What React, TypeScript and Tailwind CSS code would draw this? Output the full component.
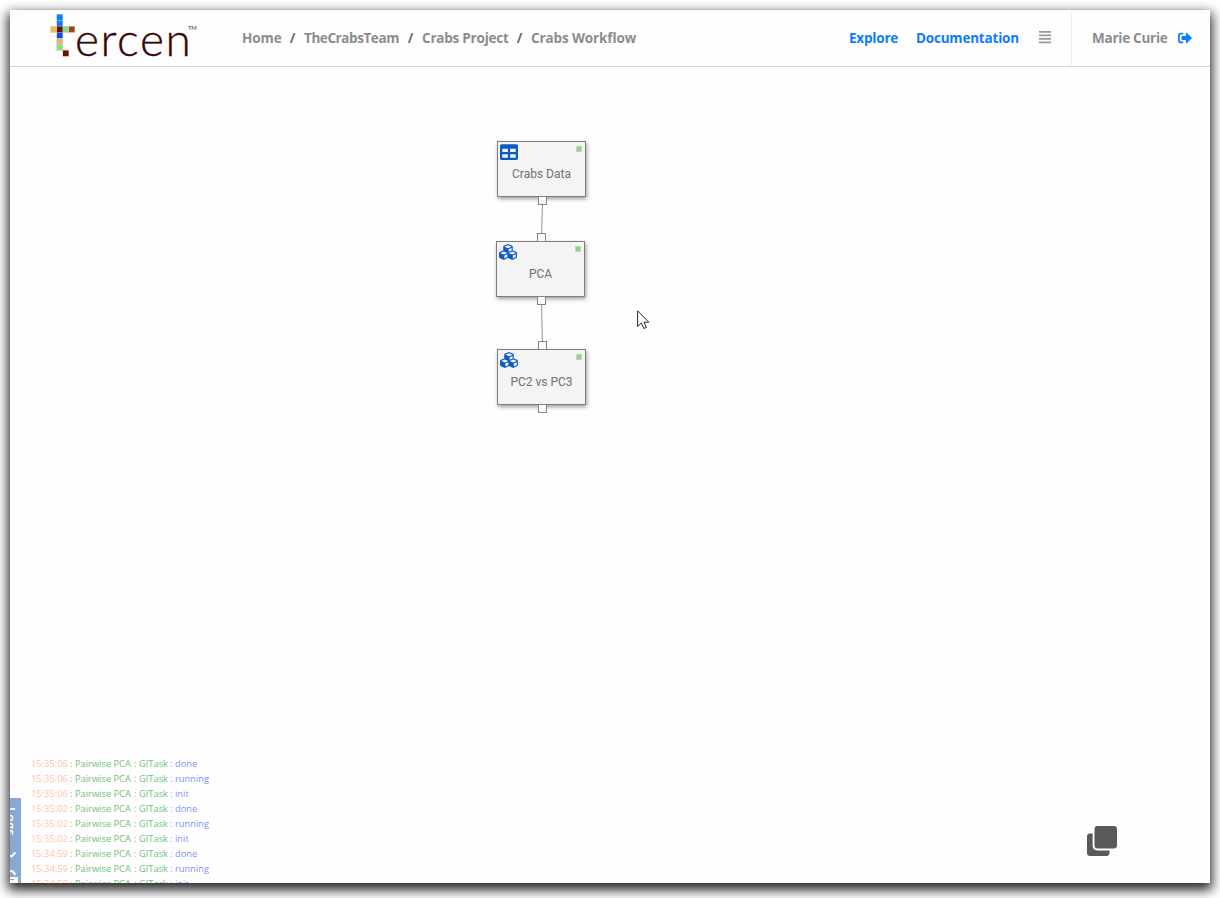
import React from "react";
import { FaAlignJustify, FaClone, FaCubes, FaSignOutAlt, FaTable } from "react-icons/fa";

const squares = [
  { x: 7, y: 0, c: "#0a80ff" },
  { x: 7, y: 6, c: "#0a80ff" },
  { x: 1, y: 12, c: "#f0b46c" },
  { x: 7, y: 12, c: "#5a1509" },
  { x: 13, y: 12, c: "#8fd694" },
  { x: 19, y: 12, c: "#984726" },
  { x: 7, y: 18, c: "#0b4fd8" },
  { x: 7, y: 24, c: "#f0b46c" },
  { x: 7, y: 30, c: "#98dc6c" },
  { x: 13, y: 36, c: "#641508" },
];

function Logo() {
  return (
    <svg className="ml-[40px] mt-[4px] shrink-0" width="150" height="50" viewBox="0 0 150 50">
      <rect x="6" y="0" width="7" height="37" fill="#9fcdf7" opacity=".6" />
      <rect x="0" y="12" width="25" height="7" fill="#f5c9a4" opacity=".8" />
      <rect x="12" y="35.5" width="7" height="7" fill="#f5b9a4" opacity=".7" />
      {squares.map((s) => (
        <rect key={`${s.x}-${s.y}`} x={s.x} y={s.y + 0.5} width={s.x === 1 ? 6 : 5.6} height="5.7" fill={s.c} />
      ))}
      <text x="25 50.5 67 90 115.5" y="41.8" fontFamily="Lato, sans-serif" fontWeight="300" fontSize="46" fill="#350807" stroke="#350807" strokeWidth=".35">
        ercen
      </text>
      <text x="138" y="15.5" textLength="8.5" lengthAdjust="spacingAndGlyphs" fontFamily="Lato, sans-serif" fontWeight="400" fontSize="6" fill="#4a3038">
        TM
      </text>
    </svg>
  );
}

const crumbs = [
  { name: "Home", w: "w-[39px] tracking-[-0.1px]" },
  { name: "TheCrabsTeam", w: "w-[95px] tracking-[-0.42px]" },
  { name: "Crabs Project", w: "w-[86px] tracking-[-0.22px]" },
  { name: "Crabs Workflow", w: "w-[106px] tracking-[-0.12px]" },
];

function Header() {
  return (
    <header className="flex h-[57px] shrink-0 border-b border-[#d6d6d6] font-['Open_Sans',sans-serif] text-[13.5px] font-bold tracking-[-0.25px] text-[#8c8c8c]">
      <Logo />
      <nav className="ml-[42px] flex items-center whitespace-nowrap">
        {crumbs.map((c, i) => (
          <React.Fragment key={c.name}>
            {i > 0 && <span className="w-[23px] text-center text-[#6c6c6c]">/</span>}
            <span className={c.w}>{c.name}</span>
          </React.Fragment>
        ))}
      </nav>
      <div className="ml-auto flex whitespace-nowrap">
        <div className="flex w-[222px] items-center tracking-[-0.2px] text-[#0d7bff]">
          <span className="w-[67px]">Explore</span>
          <span className="w-[122px]">Documentation</span>
          <FaAlignJustify className="-mt-[3px] text-[#999]" size={14} />
        </div>
        <div className="flex w-[139px] items-center border-l border-[#eee] pl-[20px]">
          <span className="w-[86px]">Marie Curie</span>
          <FaSignOutAlt className="text-[#0d7bff]" size={14} />
        </div>
      </div>
    </header>
  );
}

function Node({ label, place, table }: { label: string; place: string; table?: boolean }) {
  return (
    <div className={`absolute h-[56px] w-[89px] border border-[#7e7e7e] bg-[#f4f4f4] shadow-[1px_2px_4px_rgba(0,0,0,0.38)] ${place}`}>
      <div className="flex h-[20px] items-start justify-between pl-[2px] pr-[3px] pt-px text-[#0b5bc7]">
        {table ? <FaTable size={18} /> : <FaCubes size={18} />}
        <span className="mt-[3px] size-[6px] border border-[#b4dfb4] bg-[#8dd48f]" />
      </div>
      <div className="pt-[4px] text-center font-['Roboto',sans-serif] text-[12px] leading-[16px] text-[#707070]">{label}</div>
    </div>
  );
}

function Port({ place }: { place: string }) {
  return <div className={`absolute size-[9px] border border-[#858585] bg-[#fafafa] ${place}`} />;
}

function Canvas() {
  return (
    <>
      <svg className="absolute left-[480px] top-[180px]" width="80" height="180" fill="none" stroke="#969696">
        <path d="M52.5 14L51.5 48M51.5 114L52.5 156" />
      </svg>
      <Node label="Crabs Data" place="left-[487px] top-[131px]" table />
      <Node label="PCA" place="left-[486px] top-[231px]" />
      <Node label="PC2 vs PC3" place="left-[487px] top-[339px]" />
      <Port place="left-[528px] top-[186px]" />
      <Port place="left-[527px] top-[223px]" />
      <Port place="left-[527px] top-[286px]" />
      <Port place="left-[528px] top-[331px]" />
      <Port place="left-[528px] top-[394px]" />
      <svg className="absolute left-[627px] top-[300px]" width="13" height="20" viewBox="0 0 13 20">
        <path d="M.6 .8V16.5L4.3 13L6.8 18.5L9.3 17.4L7 12.2H11.8Z" fill="white" stroke="#252530" strokeWidth="1" />
      </svg>
    </>
  );
}

const log = [
  ["15:35:06", "done"],
  ["15:35:06", "running"],
  ["15:35:06", "init"],
  ["15:35:02", "done"],
  ["15:35:02", "running"],
  ["15:35:02", "init"],
  ["15:34:59", "done"],
  ["15:34:59", "running"],
  ["15:34:58", "init"],
];

export default function App() {
  return (
    <div className="h-[898px] w-[1220px] overflow-hidden bg-white p-[10px]">
      <div className="relative flex h-[873px] w-[1200px] flex-col bg-[#fefefe] shadow-[0_5px_11px_2px_rgba(0,0,0,0.85)]">
        <Header />
        <div className="flex min-h-0 flex-1 items-end overflow-hidden">
          <div className="relative h-[85px] w-[11px] shrink-0 overflow-hidden bg-[#86a9d3]">
            <span className="absolute -left-[7px] top-[9px] font-['Open_Sans',sans-serif] text-[13px] font-semibold leading-[16px] text-white [writing-mode:vertical-rl]">
              Logs
            </span>
            <svg className="absolute left-0 top-[50px]" width="11" height="35" fill="none" stroke="white" strokeWidth="2">
              <path d="M0 7.5L1.5 8.5L5.5 4.5M0 23Q4 22.5 5 27" />
              <path d="M0 29H8V35H0Z" fill="white" stroke="none" />
              <path d="M0 31.5H4" stroke="#86a9d3" strokeWidth="1" />
            </svg>
          </div>
          <div className="ml-[10px] h-[127px] overflow-hidden font-['Open_Sans',sans-serif] text-[9.3px] leading-[15px] text-[#a3a9a3]">
            {log.map(([time, state], i) => (
              <div key={i} className="flex whitespace-nowrap">
                <span className="w-[39px] text-[#ffc6a8]">{time}</span>
                <span className="w-[5px]">:</span>
                <span className="w-[59px] text-[#74bf78]">Pairwise PCA</span>
                <span className="w-[5px]">:</span>
                <span className="w-[31px] text-[#74bf78]">GITask</span>
                <span className="w-[5px]">:</span>
                <span className="text-[#8592fb]">{state}</span>
              </div>
            ))}
          </div>
          <FaClone className="mb-[27px] ml-auto mr-[93px] shrink-0 text-[#595959]" size={30} />
        </div>
        <Canvas />
      </div>
    </div>
  );
}
